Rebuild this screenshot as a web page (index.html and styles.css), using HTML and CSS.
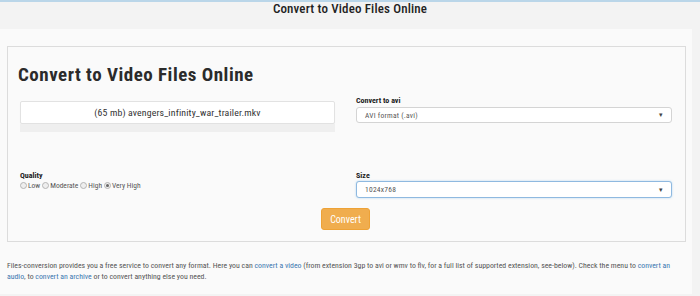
FILE: index.html
```html
<!DOCTYPE html>
<html>
<head>
<meta charset="utf-8">
<link rel="stylesheet" href="styles.css">
</head>
<body>
<div class="topbar">
  <h2 class="site-title">Convert to Video Files Online</h2>
</div>
<div class="main">
  <div class="card">
    <h1 class="card-title">Convert to Video Files Online</h1>
    <div class="row row-top">
      <div class="col">
        <div class="file-box">(65 mb) avengers_infinity_war_trailer.mkv</div>
        <div class="progress"></div>
      </div>
      <div class="col">
        <label class="label">Convert to avi</label>
        <div class="select"><span>AVI format (.avi)</span><span class="caret">▾</span></div>
      </div>
    </div>
    <div class="row row-bottom">
      <div class="col">
        <label class="label">Quality</label>
        <div class="radios">
          <span class="radio"></span><span class="rlabel">Low</span>
          <span class="radio"></span><span class="rlabel">Moderate</span>
          <span class="radio"></span><span class="rlabel">High</span>
          <span class="radio checked"></span><span class="rlabel">Very High</span>
        </div>
      </div>
      <div class="col">
        <label class="label label-size">Size</label>
        <div class="select select-focus"><span>1024x768</span><span class="caret">▾</span></div>
      </div>
    </div>
    <div class="actions">
      <button class="btn">Convert</button>
    </div>
  </div>
  <p class="intro">Files-conversion provides you a free service to convert any format. Here you can <a href="#">convert a video</a> (from extension 3gp to avi or wmv to flv, for a full list of supported extension, see-below). Check the menu to <a href="#">convert an audio</a>, to <a href="#">convert an archive</a> or to convert anything else you need.</p>
</div>
</body>
</html>
```
FILE: styles.css
```css
html, body {
  margin: 0;
  padding: 0;
}
body {
  background: #f3f3f3;
  font-family: Roboto, "Noto Sans", sans-serif;
  font-stretch: 75%;
  color: #333;
  border-top: 2px solid #bad6e9;
  height: 294px;
  overflow: hidden;
}
.topbar {
  height: 27px;
  display: flex;
  justify-content: center;
}
.site-title {
  margin: 0;
  padding-top: 0;
  font-size: 13px;
  font-weight: 500;
  letter-spacing: 0.15px;
  color: #222;
  line-height: 13px;
}
.main {
  background: #fafafa;
  width: 692px;
  padding: 17px 0 0 0;
  height: 248px;
}
.card {
  margin-left: 7px;
  width: 679px;
  border: 1px solid #dcdcdc;
  padding: 13px 13px 11px 12px;
  box-sizing: border-box;
}
.card-title {
  margin: 0 0 0 -2px;
  font-size: 19px;
  font-weight: 700;
  letter-spacing: 0.5px;
  color: #2b2b2b;
  line-height: 30px;
}
.row {
  display: grid;
  grid-template-columns: 315px 316px;
  column-gap: 21px;
}
.row-top {
  margin-top: 11px;
  height: 69px;
}
.file-box {
  height: 21px;
  border: 1px solid #e2e2e2;
  border-radius: 2px;
  background: #fff;
  box-shadow: 0 1px 1px rgba(0,0,0,0.04);
  font-size: 9.8px;
  letter-spacing: 0.15px;
  line-height: 21px;
  text-align: center;
  color: #333;
}
.progress {
  height: 8px;
  background: #efefef;
}
.label {
  display: block;
  font-size: 8px;
  font-weight: 700;
  color: #222;
  line-height: 11px;
  margin-top: -6px;
}
.select {
  margin-top: 1px;
  height: 14px;
  border: 1px solid #d4d4d4;
  border-radius: 3px;
  background: #fff;
  display: flex;
  justify-content: space-between;
  align-items: center;
  padding: 0 8px 0 8px;
  font-size: 7.5px;
  letter-spacing: 0.25px;
  color: #555;
}
.caret {
  font-size: 7px;
  color: #444;
}
.select-focus {
  height: 15px;
  border-color: #8fb9e0;
  box-shadow: 0 0 2px rgba(102,175,233,0.5);
  margin-top: 0;
}
.row-bottom .label {
  margin-top: 0;
}
.radios {
  display: flex;
  align-items: center;
  font-size: 7.5px;
  color: #555;
  margin-top: 0;
}
.radio {
  width: 5px;
  height: 5px;
  border: 1px solid #b5b5b5;
  border-radius: 50%;
  background: #eee;
  margin-right: 1px;
  position: relative;
}
.radio.checked::after {
  content: "";
  position: absolute;
  left: 1px;
  top: 1px;
  width: 3px;
  height: 3px;
  border-radius: 50%;
  background: #666;
}
.rlabel {
  margin-right: 2px;
}
.actions {
  display: flex;
  justify-content: center;
  margin-top: 10px;
}
.btn {
  width: 49px;
  height: 22px;
  background: #f0ad4e;
  border: 1px solid #eea236;
  border-radius: 3px;
  color: #fff;
  font-family: inherit;
  font-stretch: 75%;
  font-size: 10px;
  padding: 0;
  margin-left: -1px;
}
.intro {
  margin: 18px 0 0 7px;
  width: 680px;
  font-size: 7.8px;
  line-height: 11px;
  color: #555;
}
.intro a {
  color: #3c78b0;
  text-decoration: none;
}
```
